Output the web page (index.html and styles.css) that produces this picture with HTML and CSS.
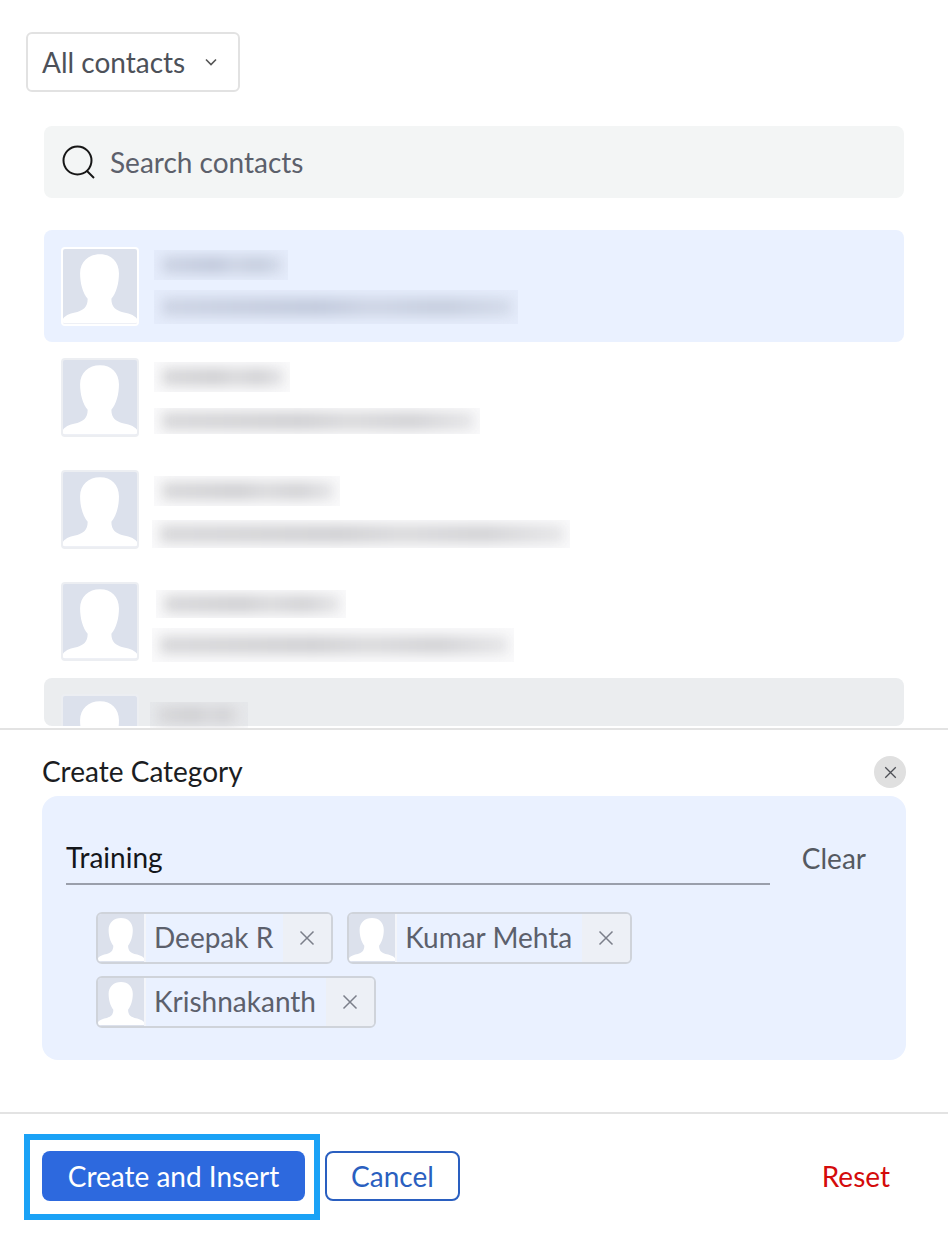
FILE: index.html
```html
<!DOCTYPE html>
<html lang="en">
<head>
    <meta charset="UTF-8">
    <meta name="viewport" content="width=device-width, initial-scale=1.0">
    <title>Create Category</title>
    <link rel="stylesheet" href="styles.css">
</head>
<body>
    <svg class="defs" width="0" height="0">
        <symbol id="person" viewBox="0 0 78 78">
            <path d="M0 78V73C3 69 9 67 15 66C21 64 26 61 26 52C21 46 18 36 18 25C18 13 27 5 39 5C51 5 59 13 59 25C59 36 56 46 51 52C51 61 56 64 62 66C68 67 75 69 78 73V78Z"/>
        </symbol>
        <symbol id="cross" viewBox="0 0 16 16">
            <path d="M1.5 1.5L14.5 14.5M14.5 1.5L1.5 14.5"/>
        </symbol>
    </svg>

    <div class="top-section">
        <div class="filter">
            <span>All contacts</span>
            <svg class="chevron" viewBox="0 0 12 8"><path d="M1 1.5L6 6.5L11 1.5"/></svg>
        </div>
        <div class="search">
            <svg class="search-icon" viewBox="0 0 34 34"><circle cx="15.5" cy="15.5" r="14"/><path d="M25 26L32 33"/></svg>
            <span>Search contacts</span>
        </div>
    </div>

    <div class="contact-list">
        <div class="contact selected">
            <div class="avatar"><svg><use href="#person"/></svg></div>
            <div class="contact-text c1">
                <div class="blur name"></div>
                <div class="blur email"></div>
            </div>
        </div>
        <div class="contact">
            <div class="avatar"><svg><use href="#person"/></svg></div>
            <div class="contact-text c2">
                <div class="blur name"></div>
                <div class="blur email"></div>
            </div>
        </div>
        <div class="contact">
            <div class="avatar"><svg><use href="#person"/></svg></div>
            <div class="contact-text c3">
                <div class="blur name"></div>
                <div class="blur email"></div>
            </div>
        </div>
        <div class="contact">
            <div class="avatar"><svg><use href="#person"/></svg></div>
            <div class="contact-text c4">
                <div class="blur name"></div>
                <div class="blur email"></div>
            </div>
        </div>
        <div class="contact hovered">
            <div class="avatar"><svg><use href="#person"/></svg></div>
            <div class="contact-text c5">
                <div class="blur name"></div>
            </div>
        </div>
    </div>

    <div class="category">
        <div class="category-head">
            <span>Create Category</span>
            <button class="close"><svg><use href="#cross"/></svg></button>
        </div>
        <div class="panel">
            <div class="name-row">
                <div class="name-input">Training</div>
                <div class="clear">Clear</div>
            </div>
            <div class="tags">
                <div class="tag">
                    <div class="tag-avatar"><svg><use href="#person"/></svg></div>
                    <span class="tag-name">Deepak R</span>
                    <div class="tag-remove"><svg><use href="#cross"/></svg></div>
                </div>
                <div class="tag">
                    <div class="tag-avatar"><svg><use href="#person"/></svg></div>
                    <span class="tag-name">Kumar Mehta</span>
                    <div class="tag-remove"><svg><use href="#cross"/></svg></div>
                </div>
                <div class="tag">
                    <div class="tag-avatar"><svg><use href="#person"/></svg></div>
                    <span class="tag-name">Krishnakanth</span>
                    <div class="tag-remove"><svg><use href="#cross"/></svg></div>
                </div>
            </div>
        </div>
    </div>

    <div class="footer">
        <div class="highlight">
            <button class="primary">Create and Insert</button>
        </div>
        <button class="secondary">Cancel</button>
        <span class="reset">Reset</span>
    </div>
</body>
</html>
```

FILE: styles.css
```css
* {
    box-sizing: border-box;
}
body {
    font-family: 'Lato', sans-serif;
    font-size: 28px;
    background-color: white;
    color: #565a63;
    margin: 0;
    padding: 0;
    height: 1246px;
    overflow: hidden;
}
button {
    font: inherit;
    padding: 0;
    cursor: pointer;
}
.defs {
    display: block;
}

.top-section {
    padding: 32px 44px 0 26px;
}
.filter {
    display: flex;
    align-items: center;
    width: 214px;
    height: 60px;
    padding-left: 14px;
    border: 2px solid #e2e2e2;
    border-radius: 6px;
    color: #4d5159;
}
.chevron {
    width: 12px;
    height: 8px;
    margin-left: 20px;
    fill: none;
    stroke: #555;
    stroke-width: 1.6;
}
.search {
    display: flex;
    align-items: center;
    height: 72px;
    margin: 34px 0 0 18px;
    padding-left: 18px;
    background-color: #f3f5f5;
    border-radius: 8px;
    color: #5c606b;
}
.search-icon {
    width: 34px;
    height: 34px;
    margin-right: 14px;
    fill: none;
    stroke: #161616;
    stroke-width: 2;
}

.contact-list {
    height: 498px;
    margin: 32px 44px 0 44px;
    overflow: hidden;
}
.contact {
    display: flex;
    height: 112px;
    padding: 16px 0 0 17px;
    border-radius: 8px;
}
.contact.selected {
    padding-top: 17px;
    background-color: #eaf1ff;
}
.contact.hovered {
    height: 48px;
    background-color: #ebedef;
}
.avatar {
    flex: none;
    width: 78px;
    height: 79px;
    border: 2px solid #eceef2;
    border-radius: 4px;
    background-color: #dce1ec;
    overflow: hidden;
}
.selected .avatar {
    border-color: white;
}
.hovered .avatar {
    height: 32px;
    border-bottom: none;
    border-radius: 4px 4px 0 0;
}
.avatar svg {
    display: block;
    width: 74px;
    height: 75px;
    fill: white;
}
.contact-text {
    position: relative;
    flex: 1;
}

/* redacted names and addresses */
.blur {
    position: relative;
    overflow: hidden;
    background-color: rgba(90, 100, 130, 0.03);
}
.blur::before {
    content: "";
    display: block;
    position: absolute;
    top: 50%;
    left: 8px;
    right: 6px;
    height: 18px;
    margin-top: -9px;
    background: linear-gradient(90deg, #d8d8da, #d0d0d3 45%, #dadadc 60%, #d2d2d5 80%, #e6e6e8);
    filter: blur(6px);
}
.selected .blur::before {
    background: linear-gradient(90deg, #cdd4e4, #c2cadc 45%, #ced5e5 60%, #c6cede 80%, #d4dbea);
}
.c1 .name { width: 134px; height: 30px; margin: 3px 0 0 15px; }
.c1 .email { width: 364px; height: 34px; margin: 10px 0 0 15px; }
.c2 .name { width: 136px; height: 30px; margin: 4px 0 0 15px; }
.c2 .email { width: 326px; height: 26px; margin: 16px 0 0 15px; }
.c3 .name { width: 186px; height: 30px; margin: 6px 0 0 15px; }
.c3 .email { width: 418px; height: 28px; margin: 14px 0 0 13px; }
.c4 .name { width: 190px; height: 28px; margin: 8px 0 0 17px; }
.c4 .email { width: 362px; height: 34px; margin: 10px 0 0 13px; }
.c5 .name { width: 98px; height: 26px; margin: 8px 0 0 11px; }

.category {
    height: 386px;
    padding: 0 42px;
    border-top: 2px solid #e3e3e3;
    border-bottom: 2px solid #e3e3e3;
}
.category-head {
    display: flex;
    align-items: center;
    justify-content: space-between;
    height: 66px;
    padding-top: 18px;
    color: #1b1d22;
}
.category-head span {
    margin-top: -2px;
}
.close {
    display: flex;
    align-items: center;
    justify-content: center;
    width: 32px;
    height: 32px;
    border: none;
    border-radius: 50%;
    background-color: #e0e0e0;
}
.close svg {
    width: 13px;
    height: 13px;
    fill: none;
    stroke: #4d4f55;
    stroke-width: 1.6;
}
.panel {
    height: 264px;
    padding: 24px 40px 0 24px;
    background-color: #eaf1ff;
    border-radius: 16px;
}
.name-row {
    display: flex;
    align-items: flex-start;
    gap: 32px;
}
.name-input {
    flex: 1;
    height: 65px;
    padding-top: 19px;
    line-height: 36px;
    border-bottom: 2px solid #9a9fab;
    color: #14161a;
}
.clear {
    line-height: 36px;
    padding-top: 20px;
    color: #555961;
}
.tags {
    display: flex;
    flex-wrap: wrap;
    align-items: flex-start;
    gap: 12px 14px;
    width: 600px;
    margin: 27px 0 0 30px;
}
.tag {
    display: flex;
    align-items: stretch;
    height: 52px;
    border: 2px solid #cfd3da;
    border-radius: 6px;
    overflow: hidden;
    color: #5c606c;
}
.tag-avatar {
    flex: none;
    width: 48px;
    height: 48px;
    border-right: 2px solid #f3f5fa;
    background-color: #dce1ec;
}
.tag-avatar svg {
    display: block;
    width: 46px;
    height: 48px;
    fill: white;
}
.tag-name {
    line-height: 47px;
    padding: 0 10px 0 8px;
}
.tag-remove {
    display: flex;
    align-items: center;
    justify-content: center;
    width: 48px;
    background-color: #edf0f6;
}
.tag-remove svg {
    width: 16px;
    height: 16px;
    fill: none;
    stroke: #7b7f8a;
    stroke-width: 1.5;
}

.footer {
    display: flex;
    align-items: flex-start;
    padding: 20px 58px 0 24px;
}
.highlight {
    width: 296px;
    height: 86px;
    padding: 11px 9px 0 12px;
    border: 6px solid #1aa2f6;
}
.primary {
    display: block;
    width: 263px;
    height: 50px;
    border: none;
    border-radius: 8px;
    background-color: #2d69de;
    color: white;
}
.secondary {
    width: 135px;
    height: 50px;
    margin: 17px 0 0 5px;
    border: 2px solid #2a5fc0;
    border-radius: 8px;
    background-color: white;
    color: #2a5fc0;
}
.reset {
    margin: 24px 0 0 auto;
    line-height: 36px;
    color: #d40b0b;
}
```
